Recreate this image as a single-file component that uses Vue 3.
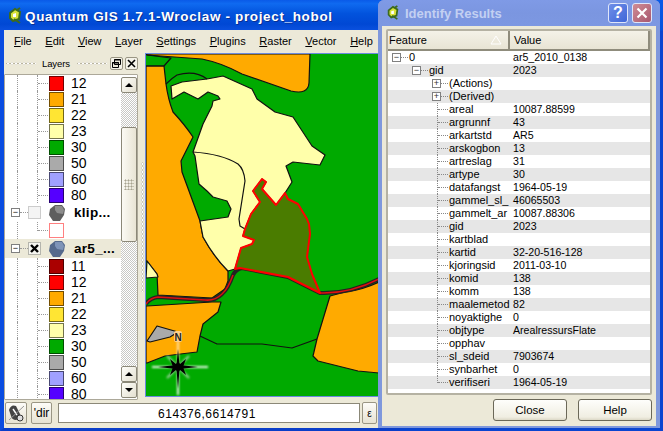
<script setup>
const legend = [
  { label: '12', color: '#ff0000' },
  { label: '21', color: '#ffaa00' },
  { label: '22', color: '#ffe533' },
  { label: '23', color: '#ffffaa' },
  { label: '30', color: '#00aa00' },
  { label: '50', color: '#aaaaaa' },
  { label: '60', color: '#a0a0ff' },
  { label: '80', color: '#5500ff' }
]
const legendFull = [{ label: '11', color: '#aa0000' }, ...legend]

const menus = [
  ['F', 'ile'], ['E', 'dit'], ['V', 'iew'], ['L', 'ayer'], ['S', 'ettings'],
  ['P', 'lugins'], ['R', 'aster'], ['V', 'ector'], ['H', 'elp']
]

const attrs = [
  ['areal', '10087.88599'],
  ['argrunnf', '43'],
  ['arkartstd', 'AR5'],
  ['arskogbon', '13'],
  ['artreslag', '31'],
  ['artype', '30'],
  ['datafangst', '1964-05-19'],
  ['gammel_sl_', '46065503'],
  ['gammelt_ar', '10087.88306'],
  ['gid', '2023'],
  ['kartblad', ''],
  ['kartid', '32-20-516-128'],
  ['kjoringsid', '2011-03-10'],
  ['komid', '138'],
  ['komm', '138'],
  ['maalemetod', '82'],
  ['noyaktighe', '0'],
  ['objtype', 'ArealressursFlate'],
  ['opphav', ''],
  ['sl_sdeid', '7903674'],
  ['synbarhet', '0'],
  ['verifiseri', '1964-05-19']
]
</script>

<template>
  <div class="desktop">
    <!-- main window -->
    <div class="win main-win">
      <div class="titlebar">
        <svg class="q-logo" viewBox="0 0 16 16" width="16" height="18">
          <path d="M3 5 L8 1 L13 4 L12 11 L6 13 L3 10Z" fill="#d8e23a" stroke="#3d6b1c" stroke-width="2"/>
          <path d="M10 2 L13 0 M7 11 L13 15" stroke="#3d6b1c" stroke-width="2"/>
          <path d="M6 6 L9 5 L9 9 L6 9Z" fill="#fff"/>
        </svg>
        <span class="title-text">Quantum GIS 1.7.1-Wroclaw - project_hobol</span>
      </div>
      <div class="menubar">
        <span v-for="m in menus" :key="m[0] + m[1]" class="menu"><u>{{ m[0] }}</u>{{ m[1] }}</span>
      </div>
      <div class="body">
        <div class="sidebar">
          <div class="dock-head">
            <span class="grip"></span>
            <span class="dock-title">Layers</span>
            <span class="grip"></span>
            <span class="dock-btn">
              <svg viewBox="0 0 11 11" width="11" height="11"><path d="M3.5 1.5h6v5h-6zM1.5 4.5h6v5h-6z" fill="#ece9d8" stroke="#000"/><path d="M3 2h7M1 5h7" stroke="#000"/></svg>
            </span>
            <span class="dock-btn">
              <svg viewBox="0 0 11 11" width="11" height="11"><path d="M2 2l7 7M9 2l-7 7" stroke="#000" stroke-width="1.6"/></svg>
            </span>
          </div>
          <div class="tree-frame">
            <div class="tree">
              <div v-for="l in legend" :key="'a' + l.label" class="legend-row">
                <span class="guide"></span><span class="guide second"></span><span class="hook"></span>
                <span class="swatch" :style="{ background: l.color }"></span>
                <span class="legend-label">{{ l.label }}</span>
              </div>
              <div class="layer-row">
                <span class="expander">−</span><span class="mini-hook"></span>
                <span class="check off"></span>
                <svg class="layer-icon" viewBox="0 0 18 18" width="18" height="18">
                  <path d="M2 5 L7 1 L14 1 L17 5 L16 11 L12 17 L5 17 L1 11Z" fill="#5e5e5e"/>
                  <path d="M7 2 L14 2 L16 6 L15 10 L9 9 L7 6Z" fill="#8d8d8d"/>
                </svg>
                <span class="layer-name">klip...</span>
              </div>
              <div class="legend-row single">
                <span class="guide"></span><span class="guide second short-guide"></span><span class="hook"></span>
                <span class="swatch blank"></span>
              </div>
              <div class="layer-row active">
                <span class="expander">−</span><span class="mini-hook"></span>
                <span class="check">
                  <svg viewBox="0 0 9 9" width="9" height="9"><path d="M1 1l7 7M8 1l-7 7" stroke="#000" stroke-width="2.4"/></svg>
                </span>
                <svg class="layer-icon" viewBox="0 0 18 18" width="18" height="18">
                  <path d="M2 5 L7 1 L14 1 L17 5 L16 11 L12 17 L5 17 L1 11Z" fill="#566a8c"/>
                  <path d="M7 2 L14 2 L16 6 L15 10 L9 9 L7 6Z" fill="#7f94b8"/>
                </svg>
                <span class="layer-name">ar5_...</span>
              </div>
              <div v-for="l in legendFull" :key="'b' + l.label" class="legend-row">
                <span class="guide"></span><span class="guide second"></span><span class="hook"></span>
                <span class="swatch" :style="{ background: l.color }"></span>
                <span class="legend-label">{{ l.label }}</span>
              </div>
            </div>
            <div class="scrollbar">
              <span class="sb-btn"><i class="arrow up"></i></span>
              <span class="sb-track small"></span>
              <span class="sb-thumb"><i class="thumb-dots"></i></span>
              <span class="sb-track"></span>
              <span class="sb-btn"><i class="arrow up"></i></span>
              <span class="sb-btn"><i class="arrow down"></i></span>
            </div>
          </div>
        </div>
        <div class="splitter"><i class="split-dots"></i></div>
        <div class="map">
          <svg viewBox="146 55 233 342" width="233" height="342">
            <defs>
              <filter id="glow" x="-30%" y="-30%" width="160%" height="160%"><feGaussianBlur stdDeviation="1"/></filter>
            </defs>
            <rect x="146" y="55" width="233" height="342" fill="#00aa00"/>
            <g stroke="#111" stroke-width="1.2" stroke-linejoin="round">
              <path d="M146 55 L147 56 L202 60 Q222 64 242 75 L291 92 Q308 96 309 84 L310 55Z" fill="#ffaa00"/>
              <path d="M146 67 L164 67 L166 85 Q168 100 173 113 Q185 126 193 138 L181 162 L182 173 L200 222 L203 238 Q214 258 228 272 L228 282 L225 290 L212 299 L158 296 L157 275 L147 262 L146 262Z" fill="#ffaa00"/>
              <path d="M147 262 L157 275 L158 278 L146 279Z" fill="#ffffaa"/>
              <path d="M147 56 L171 59 L164 67 L146 67" fill="none"/>
              <path d="M171 87 L182 83 L207 80 L223 77 L252 90 L257 100 L275 113 L293 118 L312 147 L325 156 L320 166 L293 163 L286 167 L292 183 L285 194 L276 206 L262 190 L266 183 L262 180 L253 192 L260 203 L251 215 L245 230 L243 237 L254 241 L252 245 L241 249 L235 270 L228 272 Q214 258 203 238 L200 222 L228 218 L231 210 L227 202 L213 198 L207 192 L199 185 L195 157 L193 153 L203 125 L212 107 L213 102 L220 100 L218 97 L208 93 L198 100 L184 93 L172 100Z" fill="#ffffaa"/>
              <path d="M193 153 Q222 155 238 165 Q244 170 245 182 L239 220 L240 227 L245 230" fill="none"/>
              <path d="M166 85 Q172 79 177 76 Q195 71 207 80" fill="none"/>
              <path d="M147 307 L212 303 L221 303 L218 313 L203 325 L200 337 L197 353 Q180 355 165 357 L147 364 L146 364 L146 307Z" fill="#ffaa00"/>
              <path d="M147 342 L157 327 L178 333 L170 338 L150 343Z" fill="#aaaaaa"/>
              <path d="M330 297 L317 340 L313 357 L318 362 L358 372 L379 374 L379 283 Q362 291 345 293Z" fill="#ffaa00"/>
              <path d="M200 337 L217 345 L262 345 L292 349 L317 340" fill="none"/>
            </g>
            <path d="M146 305 Q150 299 158 298 L205 301 Q215 302 222 295 Q228 290 233 276 Q236 270 242 269 L288 278 L320 294 Q350 295 379 280" fill="none" stroke="#222" stroke-width="4"/>
            <path d="M146 305 Q150 299 158 298 L205 301 Q215 302 222 295 Q228 290 233 276" fill="none" stroke="#d81010" stroke-width="1.5"/>
            <path d="M320 294 Q350 295 379 280" fill="none" stroke="#e01010" stroke-width="1.5"/>
            <path d="M285 194 L276 206 L262 190 L266 183 L262 180 L253 192 L260 203 L251 215 L245 230 L243 237 L254 241 L252 245 L241 249 L235 270 L240 269 L288 278 L320 294 L312 275 L307 258 L310 235 L309 225 L307 220 L298 205 L288 200Z" fill="#4a7c00" stroke="#ff0000" stroke-width="2" stroke-linejoin="round"/>
            <g>
              <g filter="url(#glow)" stroke="#fff" stroke-width="2" opacity="0.9">
                <path d="M178 368V396M152 368H208"/>
                <path d="M178 342V368" stroke="#ffe2b0"/>
              </g>
              <g stroke="#9fcf9f" stroke-width="2" filter="url(#glow)"><path d="M167 357L189 379M189 357L167 379"/></g>
              <path d="M178 350 L179.5 366 L198 368 L179.5 370 L178 390 L176.5 370 L158 368 L176.5 366Z" fill="#000"/>
              <path d="M178 362 L180 365 L186 360 L183 368 L186 376 L180 371 L178 374 L176 371 L170 376 L173 368 L170 360 L176 365Z" fill="#000"/>
              <rect x="174" y="332" width="8" height="11" rx="2" fill="#ffd08a"/>
              <text x="178" y="342" class="north">N</text>
            </g>
          </svg>
        </div>
      </div>
      <div class="statusbar">
        <span class="st-btn icon-btn">
          <svg viewBox="0 0 20 20" width="20" height="20">
            <path d="M3 7 Q5 1 10 3 L14 11 Q15 16 10 17 Q6 17 5 13Z" fill="#444"/>
            <path d="M7 6l4 6" stroke="#fff" stroke-width="1.4"/>
            <circle cx="14" cy="15" r="3" fill="#ddd" stroke="#333"/>
            <path d="M3 17L18 3" stroke="#999" stroke-width="1"/>
          </svg>
        </span>
        <span class="st-btn text-btn">'dir</span>
        <span class="coord">614376,6614791</span>
        <span class="st-btn eps">ε</span>
      </div>
    </div>

    <!-- identify dialog -->
    <div class="win dialog">
      <div class="dlg-title">
        <svg class="q-logo" viewBox="0 0 16 16" width="14" height="16">
          <path d="M3 5 L8 1 L13 4 L12 11 L6 13 L3 10Z" fill="#d8e23a" stroke="#3d6b1c" stroke-width="2"/>
          <path d="M10 2 L13 0 M7 11 L13 15" stroke="#3d6b1c" stroke-width="2"/>
          <path d="M6 6 L9 5 L9 9 L6 9Z" fill="#fff"/>
        </svg>
        <span class="dlg-title-text">Identify Results</span>
        <span class="cap help">?</span>
        <span class="cap close">
          <svg viewBox="0 0 12 12" width="12" height="12"><path d="M1.5 1.5l9 9M10.5 1.5l-9 9" stroke="#fff" stroke-width="2.2"/></svg>
        </span>
      </div>
      <div class="dlg-body">
        <div class="table">
          <div class="thead">
            <div class="th th-feature">Feature<svg class="sort" viewBox="0 0 12 10" width="12" height="10"><path d="M6 1L11 9H1Z" fill="none" stroke="#fff"/></svg></div>
            <div class="th th-value">Value</div>
          </div>
          <div class="tbody">
            <div class="row">
              <div class="cell-f lvl0"><span class="tbox">−</span><span class="dots"></span>0</div>
              <div class="cell-v">ar5_2010_0138</div>
            </div>
            <div class="row alt">
              <div class="cell-f lvl1"><span class="tbox">−</span><span class="dots"></span>gid</div>
              <div class="cell-v">2023</div>
            </div>
            <div class="row">
              <div class="cell-f lvl2"><span class="tbox">+</span><span class="dots"></span>(Actions)</div>
              <div class="cell-v"></div>
            </div>
            <div class="row alt">
              <div class="cell-f lvl2"><span class="tbox">+</span><span class="dots"></span>(Derived)</div>
              <div class="cell-v"></div>
            </div>
            <div v-for="(a, i) in attrs" :key="a[0] + i" class="row" :class="{ alt: i % 2 === 1 }">
              <div class="cell-f lvl3" :class="{ last: i === attrs.length - 1 }"><span class="dots"></span>{{ a[0] }}</div>
              <div class="cell-v">{{ a[1] }}</div>
            </div>
          </div>
        </div>
        <div class="dlg-buttons">
          <button class="btn">Close</button>
          <button class="btn">Help</button>
        </div>
      </div>
    </div>
  </div>
</template>

<style>
html, body { margin: 0; padding: 0; background: #0a45d0; }
</style>

<style scoped>
.desktop {
  position: relative;
  width: 663px;
  height: 431px;
  overflow: hidden;
  font-family: "Liberation Sans", Arial, sans-serif;
  font-size: 11px;
  color: #000;
  background: linear-gradient(180deg, #0a5ae8 0, #0253dd 30px, #0a45d0 31px);
}
.win { position: absolute; box-sizing: border-box; background: #ece9d8; }
.main-win {
  left: 0;
  top: 0;
  width: 400px;
  height: 431px;
  display: flex;
  flex-direction: column;
  border-left: 4px solid #0a4ce0;
  border-bottom: 3px solid #0a3ec8;
}
.titlebar {
  height: 30px;
  margin-left: -4px;
  padding: 2px 0 0 7px;
  display: flex;
  align-items: center;
  gap: 2px;
  box-sizing: border-box;
  background: linear-gradient(180deg, #0a5ae8 0%, #0f6af0 12%, #0253dd 45%, #0048d4 80%, #0a50de 100%);
}
.title-text {
  color: #fff;
  font-weight: 700;
  font-size: 13.5px;
  letter-spacing: 0.65px;
  text-shadow: 1px 1px 0 #0a2f90;
  white-space: nowrap;
}
.menubar {
  height: 22px;
  display: flex;
  align-items: center;
  gap: 13.6px;
  padding-left: 10px;
  font-size: 11px;
  white-space: nowrap;
}
.body { display: flex; height: 347px; padding-top: 1px; }
.sidebar { width: 134px; display: flex; flex-direction: column; }
.dock-head {
  height: 21px;
  display: flex;
  align-items: center;
  padding-left: 2px;
}
.dock-title { font-size: 9.5px; width: 26px; margin: 0 9px 0 6px; letter-spacing: -0.1px; }
.grip {
  width: 30px;
  height: 3px;
  background-image: radial-gradient(circle, #fff 35%, #b8b4a0 60%, transparent 70%);
  background-size: 4px 3px;
}
.dock-btn {
  box-sizing: border-box;
  width: 13px;
  height: 13px;
  margin-left: 3px;
  display: flex;
  align-items: center;
  justify-content: center;
  border: 1px solid #9a9684;
  border-radius: 2px;
  background: #f4f2e8;
}
.dock-btn + .dock-btn { margin-left: 2px; }
.tree-frame {
  flex: 1;
  min-height: 0;
  display: flex;
  border: 1px solid #aca899;
  background: #fff;
  overflow: hidden;
  border-radius: 1px;
}
.tree { flex: 1; min-width: 0; overflow: hidden; font-size: 14px; }
.legend-row {
  position: relative;
  height: 16px;
  display: flex;
  align-items: center;
  padding-left: 44px;
}
.legend-row.single { height: 17px; }
.guide {
  position: absolute;
  left: 12px;
  top: 0;
  bottom: 0;
  border-left: 1px dotted #999;
}
.guide.second { left: 32px; }
.guide.short-guide { bottom: 8px; }
.hook {
  position: absolute;
  left: 33px;
  top: 8px;
  width: 10px;
  border-top: 1px dotted #999;
}
.swatch {
  box-sizing: border-box;
  width: 15px;
  height: 15px;
  border: 1px solid rgba(0, 0, 0, 0.55);
  flex: none;
}
.swatch.blank { background: #fff; border: 1px solid #ff8080; }
.legend-label { margin-left: 7px; line-height: 16px; }
.layer-row {
  height: 19px;
  display: flex;
  align-items: center;
  padding-left: 6px;
  font-weight: 700;
  font-size: 13.5px;
}
.layer-row.active { background: #ece9d8; }
.expander {
  box-sizing: border-box;
  width: 9px;
  height: 9px;
  border: 1px solid #7f7f7f;
  background: #fff;
  font-weight: 400;
  font-size: 9px;
  line-height: 7px;
  text-align: center;
  flex: none;
}
.mini-hook { width: 8px; border-top: 1px dotted #999; flex: none; }
.check {
  box-sizing: border-box;
  width: 13px;
  height: 13px;
  border: 1px solid #b5b5ad;
  background: #f5f5f0;
  display: flex;
  align-items: center;
  justify-content: center;
  flex: none;
}
.check.off { background: #f4f4f4; border-color: #ccc; }
.layer-icon { margin-left: 7px; flex: none; }
.layer-name { margin-left: 8px; letter-spacing: 0.3px; white-space: nowrap; }
.scrollbar {
  width: 16px;
  flex: none;
  display: flex;
  flex-direction: column;
  background: #fff;
}
.sb-btn {
  box-sizing: border-box;
  height: 16px;
  flex: none;
  display: flex;
  align-items: center;
  justify-content: center;
  border: 1px solid #8b8878;
  border-radius: 2px;
  background: linear-gradient(135deg, #fefefa, #e4e0d0);
}
.sb-btn:first-child { margin-top: 2px; }
.sb-btn:last-child { margin-bottom: 1px; }
.arrow { width: 0; height: 0; border-left: 4px solid transparent; border-right: 4px solid transparent; }
.arrow.up { border-bottom: 4px solid #000; }
.arrow.down { border-top: 4px solid #000; }
.sb-track {
  flex: 1;
  background-color: #fff;
  background-image: conic-gradient(#c8c8c4 25%, #fff 0 50%, #c8c8c4 0 75%, #fff 0);
  background-size: 2px 2px;
}
.sb-track.small { flex: none; height: 34px; }
.sb-thumb {
  box-sizing: border-box;
  height: 115px;
  flex: none;
  display: flex;
  align-items: center;
  justify-content: center;
  border: 1px solid #8b8878;
  border-radius: 2px;
  background: linear-gradient(90deg, #fbfaf4, #e8e4d4);
}
.thumb-dots {
  width: 10px;
  height: 11px;
  background-image: radial-gradient(circle, #a8a490 45%, transparent 50%);
  background-size: 3px 3px;
}
.splitter {
  width: 8px;
  display: flex;
  align-items: center;
  justify-content: center;
}
.split-dots {
  width: 3px;
  height: 130px;
  background-image: radial-gradient(circle, #fff 30%, #bbb7a4 55%, transparent 70%);
  background-size: 3px 4px;
}
.map {
  margin-top: 1px;
  height: 342px;
  width: 233px;
  outline: 1px solid #6a8ae0;
  overflow: hidden;
}
.map svg { display: block; }
.north { font: 700 10px "Liberation Sans", sans-serif; text-anchor: middle; fill: #222; }
.statusbar {
  flex: 1;
  display: flex;
  align-items: center;
  gap: 4px;
  padding: 0 0 2px 1px;
}
.st-btn {
  box-sizing: border-box;
  height: 22px;
  display: flex;
  align-items: center;
  justify-content: center;
  flex: none;
  border: 1px solid #9a9684;
  border-radius: 2px;
  background: linear-gradient(180deg, #fdfcf8, #e6e2d2);
  overflow: hidden;
}
.icon-btn { width: 22px; }
.text-btn { width: 21px; font-size: 12px; }
.coord {
  width: 302px;
  height: 20px;
  line-height: 20px;
  text-align: center;
  flex: none;
  margin-left: 2px;
  background: #fff;
  box-sizing: border-box;
  border: 1px solid #8b8878;
  font-size: 12px;
  letter-spacing: 0.55px;
  padding-right: 4px;
}
.eps { width: 15px; margin-left: -2px; font-size: 10px; }

.dialog {
  left: 378px;
  top: 0;
  width: 282px;
  height: 428px;
  background: #7f98dc;
  border-radius: 6px 6px 0 0;
  display: flex;
  flex-direction: column;
}
.dlg-title {
  height: 26px;
  flex: none;
  display: flex;
  align-items: center;
  padding: 0 8px 0 8px;
  gap: 5px;
  background: linear-gradient(180deg, #7f9ae6, #7b96e0 50%, #7d98e2);
  border-radius: 6px 6px 0 0;
}
.dlg-title-text {
  flex: 1;
  color: #c3d0f2;
  font-size: 13px;
  font-weight: 700;
}
.cap {
  box-sizing: border-box;
  width: 20px;
  height: 20px;
  border: 1px solid #dfe6fa;
  border-radius: 3px;
  display: flex;
  align-items: center;
  justify-content: center;
  color: #fff;
  font-weight: 700;
  font-size: 16px;
}
.cap.help { background: linear-gradient(135deg, #6f8fe8, #3f66d8); margin-right: -1px; }
.cap.close { background: linear-gradient(135deg, #d08c94, #a85870); }
.dlg-body {
  flex: 1;
  min-height: 0;
  margin: 0 4px 2px 4px;
  padding: 3px 4px 0;
  background: #ece9d8;
  display: flex;
  flex-direction: column;
  box-sizing: border-box;
}
.table {
  height: 366px;
  flex: none;
  box-sizing: border-box;
  border: 2px solid #b5b2a3;
  border-radius: 2px;
  background: #fff;
  overflow: hidden;
}
.thead { display: flex; height: 20px; box-sizing: border-box; }
.th {
  box-sizing: border-box;
  padding: 3px 0 0 3px;
  font-size: 11px;
  background: linear-gradient(180deg, #f4f2e8, #e8e4d4);
  border-right: 2px solid #8f8c7c;
  border-bottom: 2px solid #8f8c7c;
}
.th-feature { width: 122px; display: flex; justify-content: space-between; padding-left: 1px; padding-right: 6px; }
.th-value { flex: 1; padding-left: 4px; }
.sort { margin-top: 1px; }
.row { display: flex; height: 13px; line-height: 13px; font-size: 11px; white-space: nowrap; }
.row.alt { background: #e6e6e6; }
.cell-f { box-sizing: border-box; width: 122px; flex: none; display: flex; align-items: center; position: relative; }
.cell-v { padding-left: 3px; font-size: 10.6px; }
.lvl0 { padding-left: 4px; }
.lvl1 { padding-left: 24px; }
.lvl2 { padding-left: 44px; }
.lvl3 { padding-left: 50px; }
.lvl3::before {
  content: "";
  position: absolute;
  left: 49px;
  top: 0;
  bottom: 0;
  border-left: 1px dotted #888;
}
.lvl3.last::before { bottom: 6px; }
.tbox {
  box-sizing: border-box;
  width: 9px;
  height: 9px;
  border: 1px solid #808080;
  font-size: 9px;
  line-height: 6px;
  text-align: center;
  flex: none;
  background: #fff;
  color: #333;
}
.dots { width: 7px; margin-right: 1px; border-top: 1px dotted #888; flex: none; }
.lvl3 .dots { width: 10px; margin-right: 1px; }
.dlg-buttons {
  flex: 1;
  display: flex;
  justify-content: flex-end;
  align-items: center;
  gap: 11px;
  padding-bottom: 1px;
}
.btn {
  box-sizing: border-box;
  width: 74px;
  height: 22px;
  padding: 0;
  border: 1px solid #6b6858;
  border-radius: 3px;
  background: linear-gradient(180deg, #fefefb, #f0eee2 85%, #dcd8c6);
  font: 11.5px "Liberation Sans", Arial, sans-serif;
  color: #000;
}
</style>
